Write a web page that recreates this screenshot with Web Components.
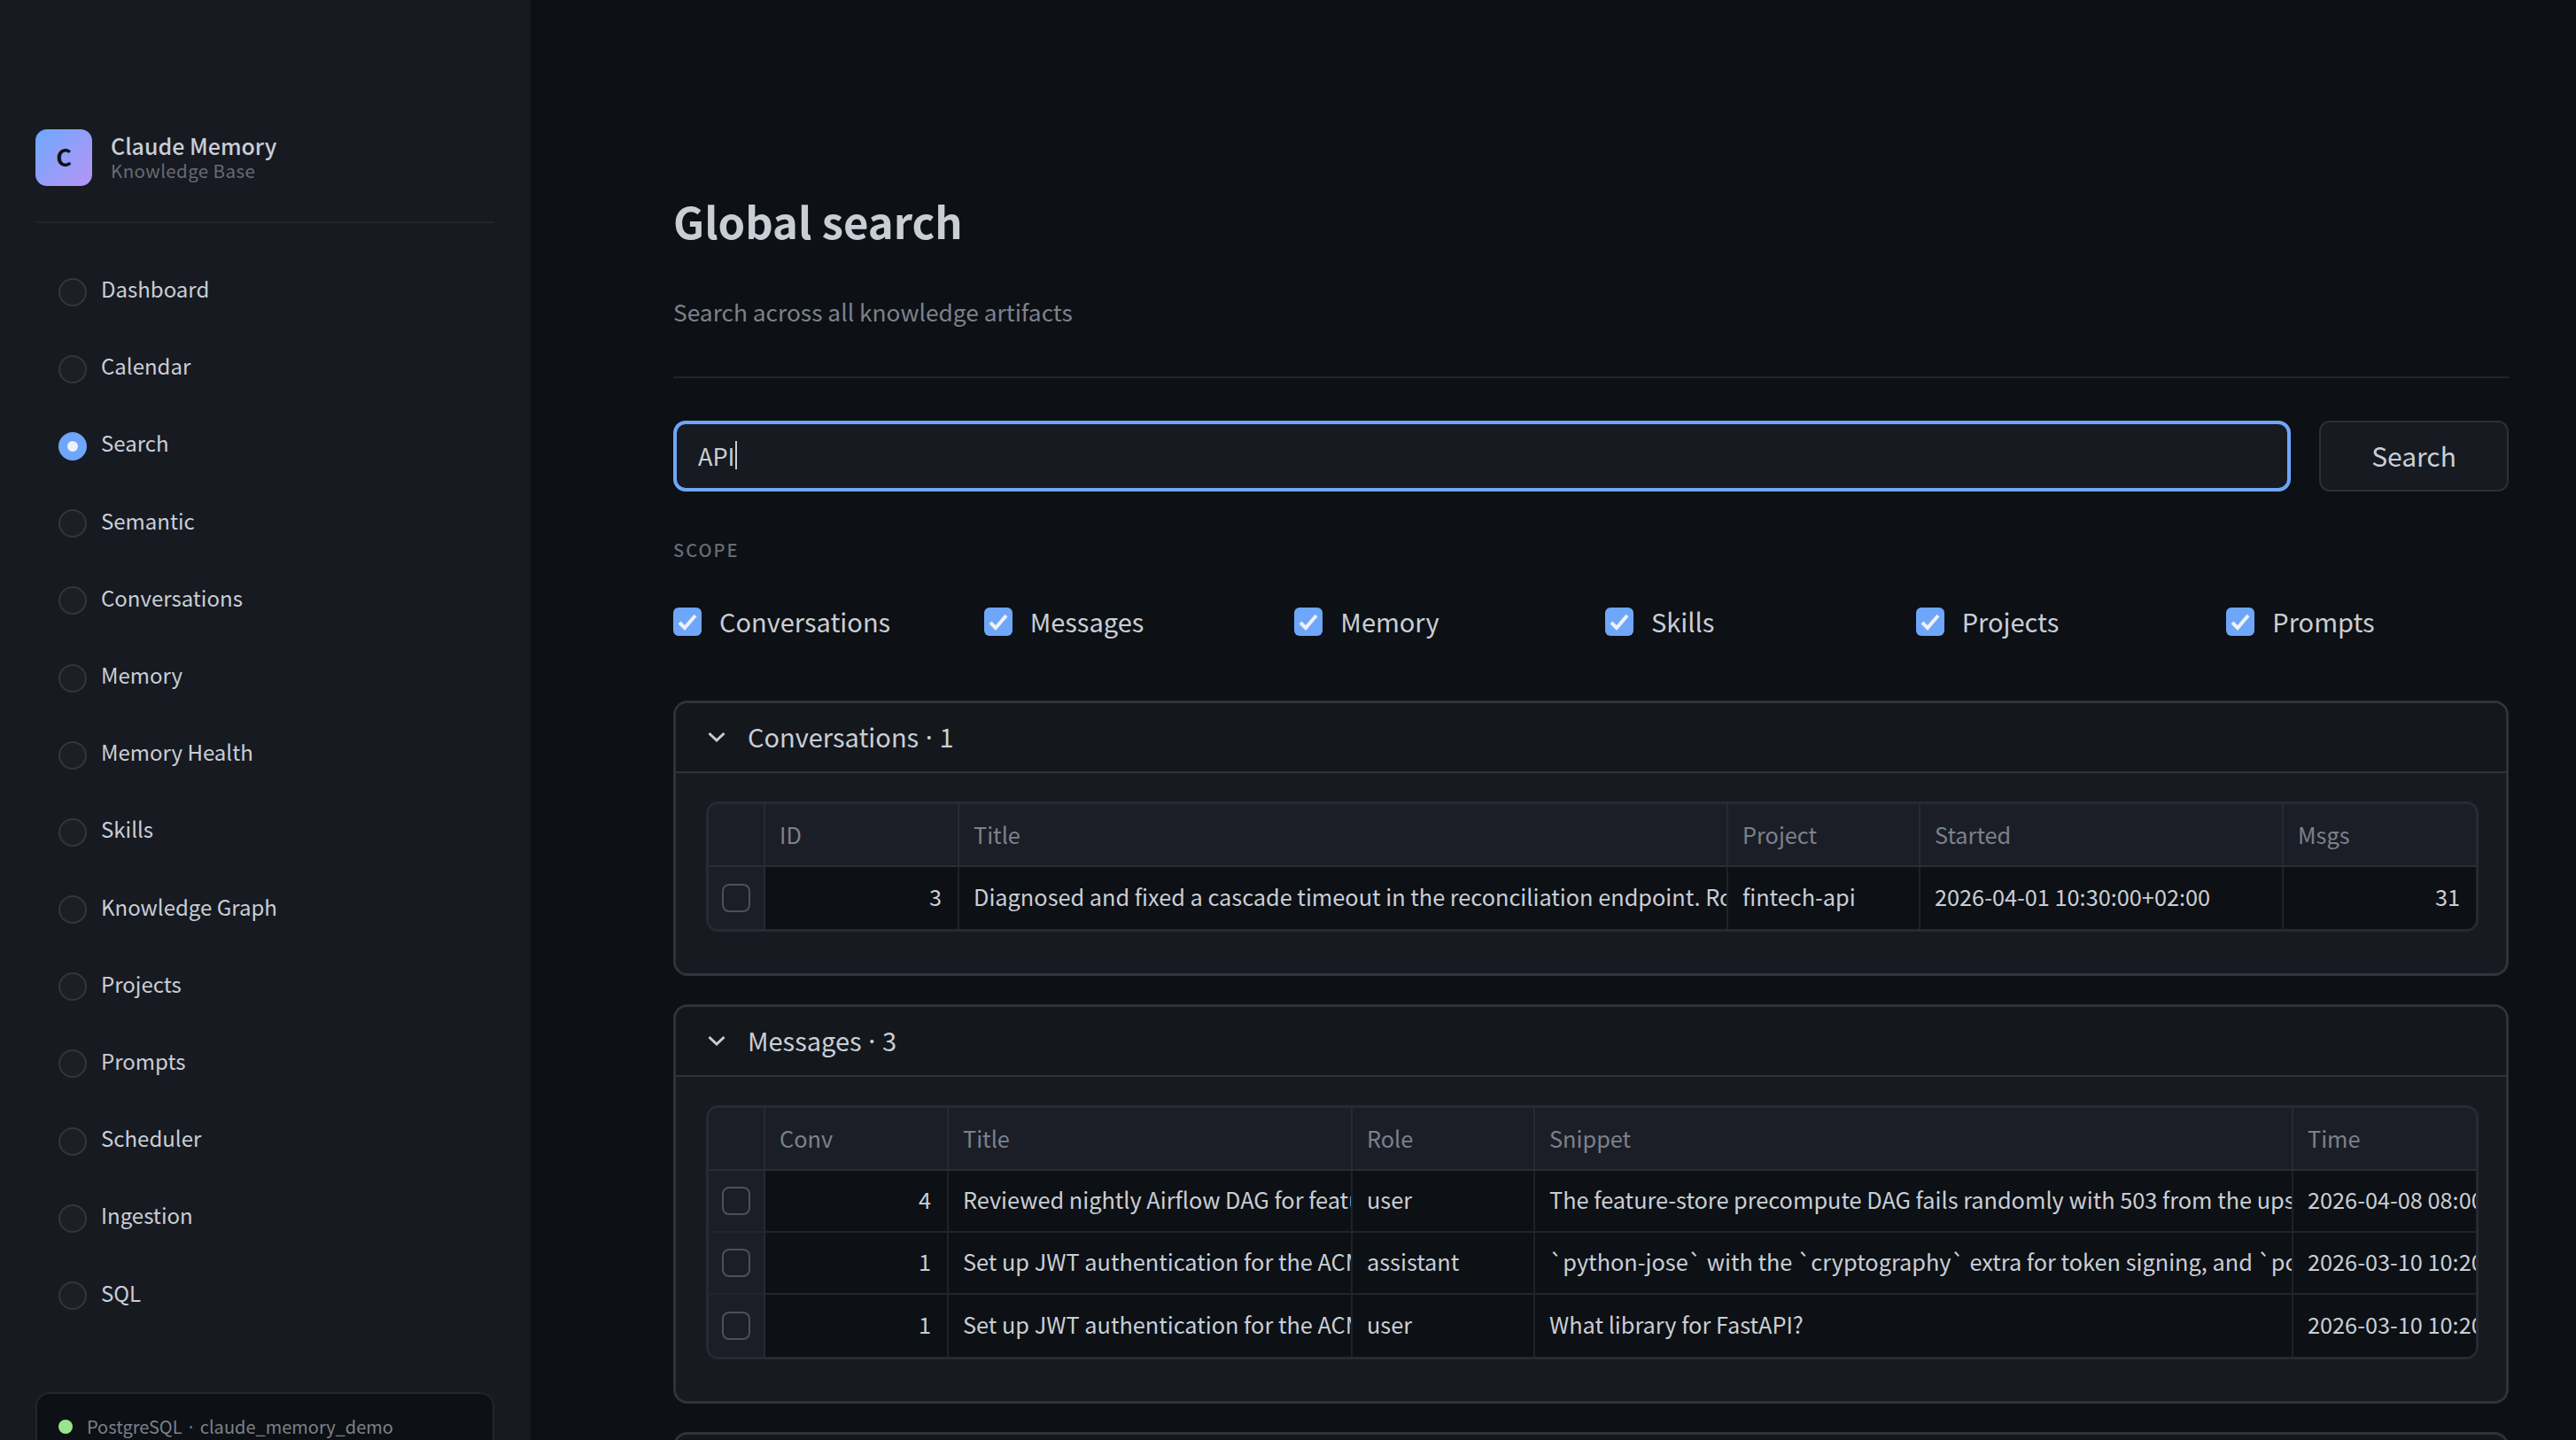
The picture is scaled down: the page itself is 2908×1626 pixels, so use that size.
<!DOCTYPE html>
<html lang="en">
<head>
<meta charset="utf-8">
<title>Claude Memory</title>
<style>
  html, body { margin: 0; height: 100%; background: #0d1014; overflow: hidden; }
  body {
    font-family: "Noto Sans CJK JP", "Noto Sans", sans-serif;
    color: #c9ced6;
    --panel: #171a21;
    --raised: #1b1e26;
    --page: #0d1014;
    --line: #2f333b;
    --soft-line: #22252c;
    --muted: #7c818b;
    --accent: #6ea6f9;
  }
</style>
</head>
<body>
<app-shell>
  <side-bar slot="side"></side-bar>
  <page-head heading="Global search" sub="Search across all knowledge artifacts"></page-head>
  <search-box value="API"></search-box>
  <scope-filter></scope-filter>
  <div id="results" style="display:flex;flex-direction:column;gap:32px">
    <result-panel id="conv" heading="Conversations · 1"></result-panel>
    <result-panel id="msgs" heading="Messages · 3"></result-panel>
    <result-panel heading=""></result-panel>
  </div>
</app-shell>

<script>
class AppShell extends HTMLElement {
  constructor() {
    super();
    this.attachShadow({ mode: 'open' });
    this.shadowRoot.innerHTML = `
      <style>
        :host { display: grid; grid-template-columns: 600px 1fr; height: 1626px; overflow: hidden; }
        main { padding: 0 76px 0 160px; min-width: 0; overflow: hidden; }
      </style>
      <slot name="side"></slot>
      <main><slot></slot></main>`;
  }
}

const NAV = ['Dashboard', 'Calendar', 'Search', 'Semantic', 'Conversations', 'Memory', 'Memory Health',
  'Skills', 'Knowledge Graph', 'Projects', 'Prompts', 'Scheduler', 'Ingestion', 'SQL'];

class SideBar extends HTMLElement {
  constructor() {
    super();
    this.attachShadow({ mode: 'open' });
  }

  connectedCallback() {
    this.shadowRoot.innerHTML = `
      <style>
        :host {
          display: block; box-sizing: border-box; height: 1626px; overflow: hidden;
          background: var(--panel); border-right: 2px solid #111419;
          padding: 146px 40px 0;
        }
        .brand { display: flex; align-items: center; gap: 21px; height: 64px; }
        .logo {
          width: 64px; height: 64px; border-radius: 13px; flex: none; box-sizing: border-box; padding-bottom: 3px;
          background: linear-gradient(135deg, #6ea8fe, #b794f4);
          display: flex; align-items: center; justify-content: center;
          color: #0d1014; font-weight: 700; font-size: 27px;
        }
        .text { margin-top: -4px; }
        .name { font-size: 25px; font-weight: 500; line-height: 33px; color: #c9ced6; }
        .tag { font-size: 20.5px; line-height: 23px; color: #666b75; letter-spacing: .4px; }
        hr { border: 0; height: 2px; background: #22252c; margin: 40px 0 30px; }
        nav { display: flex; flex-direction: column; }
        .status {
          margin-top: 69px; background: var(--page);
          border: 2px solid #22252c; border-radius: 16px;
          padding: 23px 24px 24px; display: flex; align-items: center; gap: 16px;
          font-size: 20px; line-height: 28px; color: #7c818b;
        }
        .dot { width: 16px; height: 16px; border-radius: 50%; background: #98e58e; flex: none; }
      </style>
      <div class="brand">
        <div class="logo">C</div>
        <div class="text"><div class="name">Claude Memory</div><div class="tag">Knowledge Base</div></div>
      </div>
      <hr>
      <nav>${NAV.map(n => `<nav-link ${n === 'Search' ? 'active' : ''}>${n}</nav-link>`).join('')}</nav>
      <div class="status"><span class="dot"></span><span>PostgreSQL · claude_memory_demo</span></div>`;
  }
}

class NavLink extends HTMLElement {
  constructor() {
    super();
    this.attachShadow({ mode: 'open' });
    this.shadowRoot.innerHTML = `
      <style>
        :host { display: flex; align-items: center; gap: 16px; height: 87.2px; padding-left: 26px; font-size: 24px; color: #c9ced6; }
        .radio {
          width: 32px; height: 32px; box-sizing: border-box; border-radius: 50%; flex: none; margin-top: 8px;
          border: 2px solid #33373d; background: #1c2025; display: flex; align-items: center; justify-content: center;
        }
        :host([active]) .radio { background: var(--accent); border-color: var(--accent); }
        :host([active]) .radio::after { content: ''; width: 12px; height: 12px; border-radius: 50%; background: #eef2f8; }
      </style>
      <span class="radio"></span><slot></slot>`;
  }
}

class PageHead extends HTMLElement {
  constructor() {
    super();
    this.attachShadow({ mode: 'open' });
  }

  connectedCallback() {
    this.shadowRoot.innerHTML = `
      <style>
        :host { display: block; padding: 213px 0 54px; border-bottom: 2px solid #22252c; }
        h1 { margin: 0; font-size: 49px; line-height: 72px; font-weight: 700; color: #c9ced6; }
        p { margin: 48px 0 0; font-size: 26.3px; line-height: 38px; color: #7c818b; }
      </style>
      <h1>${this.getAttribute('heading')}</h1>
      <p>${this.getAttribute('sub')}</p>`;
  }
}

class SearchBox extends HTMLElement {
  constructor() {
    super();
    this.attachShadow({ mode: 'open' });
  }

  connectedCallback() {
    this.shadowRoot.innerHTML = `
      <style>
        :host { display: flex; gap: 32px; margin-top: 48px; height: 80px; }
        .field {
          flex: 1; box-sizing: border-box; border: 4px solid var(--accent); border-radius: 14px;
          background: var(--panel); padding: 0 24px 2px; display: flex; align-items: center;
          font-size: 27px; color: #c9ced6;
        }
        .caret { width: 2px; height: 32px; background: #c9ced6; margin-left: 1px; }
        button {
          width: 214px; box-sizing: border-box; border: 2px solid #2c3037; border-radius: 12px; padding: 0 0 3px;
          background: var(--panel); color: #c9ced6; font: inherit; font-size: 30px;
        }
      </style>
      <div class="field" role="textbox"><span>${this.getAttribute('value')}</span><span class="caret"></span></div>
      <button>Search</button>`;
  }
}

class ScopeFilter extends HTMLElement {
  constructor() {
    super();
    this.attachShadow({ mode: 'open' });
    const names = ['Conversations', 'Messages', 'Memory', 'Skills', 'Projects', 'Prompts'];
    this.shadowRoot.innerHTML = `
      <style>
        :host { display: block; margin-top: 54px; }
        .label { font-size: 20px; line-height: 24px; font-weight: 500; letter-spacing: 2px; color: #666b75; }
        .row { display: grid; grid-template-columns: repeat(6, 1fr); gap: 32px; margin-top: 49px; margin-bottom: 69px; }
        label { display: flex; align-items: center; gap: 20px; height: 40px; font-size: 29px; color: #c9ced6; }
        label span { margin-top: -3px; }
        svg { width: 32px; height: 32px; flex: none; }
      </style>
      <div class="label">SCOPE</div>
      <div class="row">${names.map(n => `
        <label>
          <svg viewBox="0 0 32 32"><rect width="32" height="32" rx="6" fill="#6ea6f9"/><path d="M7 17l6 6L25 9" fill="none" stroke="#eef2f8" stroke-width="4"/></svg>
          <span>${n}</span>
        </label>`).join('')}</div>`;
  }
}

class ResultPanel extends HTMLElement {
  constructor() {
    super();
    this.attachShadow({ mode: 'open' });
  }

  connectedCallback() {
    this.shadowRoot.innerHTML = `
      <style>
        :host { display: block; border: 3px solid var(--line); border-radius: 16px; overflow: hidden; background: var(--panel); }
        header {
          display: flex; align-items: center; gap: 23px; height: 77px; padding-left: 34px;
          background: #14171c; border-bottom: 2px solid var(--line);
          font-size: 29px; word-spacing: -3px; color: #c9ced6;
        }
        header span { margin-top: -3px; }
        svg { width: 24px; height: 24px; flex: none; margin-top: -2px; }
        .body { padding: 32px 31px 47px 34px; }
      </style>
      <header>
        <svg viewBox="0 0 24 24"><path d="M3.5 8l8.5 8 8.500-8" fill="none" stroke="#c9ced6" stroke-width="3"/></svg>
        <span>${this.getAttribute('heading')}</span>
      </header>
      <div class="body"><slot></slot></div>`;
  }
}

class ResultTable extends HTMLElement {
  constructor() {
    super();
    this.attachShadow({ mode: 'open' });
  }

  set data({ columns, rows }) {
    const cols = columns.map(c => `<col style="width:${c.w}px">`).join('');
    const head = columns.map(c => `<th>${c.t}</th>`).join('');
    const body = rows.map(r => `<tr><td class="sel"><span class="box"></span></td>${r.map((v, i) =>
      `<td class="${columns[i].num ? 'num' : ''}">${v}</td>`).join('')}</tr>`).join('');
    this.shadowRoot.innerHTML = `
      <style>
        :host { display: block; border: 3px solid #262a31; border-radius: 14px; overflow: hidden; }
        table { width: 100%; table-layout: fixed; border-collapse: separate; border-spacing: 0; font-size: 25.3px; }
        th {
          height: 71px; box-sizing: border-box; padding: 0 16px 2px; text-align: left; font-weight: 400;
          background: var(--raised); color: #7c818b;
          border-right: 2px solid #272a31; border-bottom: 2px solid #2a2d34;
        }
        td {
          height: 70px; box-sizing: border-box; padding: 0 16px 4px; white-space: nowrap; overflow: hidden;
          background: var(--page); color: #c9ced6;
          border-right: 2px solid #1f2228; border-bottom: 2px solid #22252c;
        }
        th:last-child, td:last-child { border-right: 0; }
        tr:last-child td { border-bottom: 0; }
        td.num { text-align: right; padding-right: 18px; }
        td.sel { background: var(--raised); padding: 0 0 6px; text-align: center; border-right-color: #272a31; }
        .box {
          display: inline-block; vertical-align: middle; width: 32px; height: 32px; box-sizing: border-box;
          border: 2px solid #4b5059; border-radius: 8px;
        }
      </style>
      <table>
        <colgroup><col style="width:64px">${cols}</colgroup>
        <thead><tr><th></th>${head}</tr></thead>
        <tbody>${body}</tbody>
      </table>`;
  }
}

customElements.define('app-shell', AppShell);
customElements.define('side-bar', SideBar);
customElements.define('nav-link', NavLink);
customElements.define('page-head', PageHead);
customElements.define('search-box', SearchBox);
customElements.define('scope-filter', ScopeFilter);
customElements.define('result-panel', ResultPanel);
customElements.define('result-table', ResultTable);

const convTable = document.createElement('result-table');
convTable.data = {
  columns: [{ t: 'ID', w: 219, num: true }, { t: 'Title', w: 868 }, { t: 'Project', w: 217 }, { t: 'Started', w: 410 }, { t: 'Msgs', w: 217, num: true }],
  rows: [['3', 'Diagnosed and fixed a cascade timeout in the reconciliation endpoint. Ro', 'fintech-api', '2026-04-01 10:30:00+02:00', '31']]
};
document.getElementById('conv').appendChild(convTable);

const msgTable = document.createElement('result-table');
msgTable.data = {
  columns: [{ t: 'Conv', w: 207, num: true }, { t: 'Title', w: 456 }, { t: 'Role', w: 206 }, { t: 'Snippet', w: 856 }, { t: 'Time', w: 206 }],
  rows: [
    ['4', 'Reviewed nightly Airflow DAG for featu', 'user', 'The feature-store precompute DAG fails randomly with 503 from the ups', '2026-04-08 08:00'],
    ['1', 'Set up JWT authentication for the ACM', 'assistant', '`python-jose` with the `cryptography` extra for token signing, and `pc', '2026-03-10 10:20'],
    ['1', 'Set up JWT authentication for the ACM', 'user', 'What library for FastAPI?', '2026-03-10 10:20']
  ]
};
document.getElementById('msgs').appendChild(msgTable);
</script>
</body>
</html>
